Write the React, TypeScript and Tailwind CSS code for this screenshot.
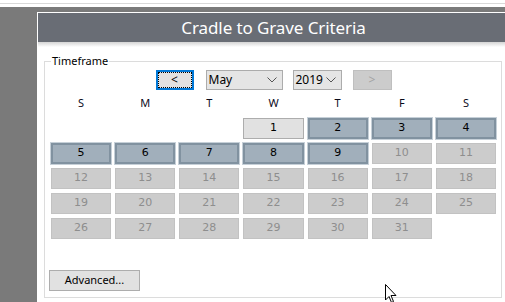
const WEEKDAYS = ["S", "M", "T", "W", "T", "F", "S"];

type Cell = { day: number; kind: "open" | "picked" | "off" } | null;

const cells: Cell[] = [
  null,
  null,
  null,
  { day: 1, kind: "open" },
  { day: 2, kind: "picked" },
  { day: 3, kind: "picked" },
  { day: 4, kind: "picked" },
  { day: 5, kind: "picked" },
  { day: 6, kind: "picked" },
  { day: 7, kind: "picked" },
  { day: 8, kind: "picked" },
  { day: 9, kind: "picked" },
  ...Array.from({ length: 22 }, (_, i) => ({ day: i + 10, kind: "off" as const })),
];

function DayCell({ cell }: { cell: Cell }) {
  if (!cell) return <div className="h-[21px]" />;
  if (cell.kind === "picked") {
    return (
      <div className="h-[21px] flex items-center justify-center bg-[#a1afbb] border-2 border-[#8192a0] outline outline-1 outline-[#c6d0d8] text-black">
        {cell.day}
      </div>
    );
  }
  if (cell.kind === "open") {
    return (
      <div className="h-[21px] flex items-center justify-center bg-[#e1e1e1] border border-[#adadad] text-black">
        {cell.day}
      </div>
    );
  }
  return (
    <div className="h-[21px] flex items-center justify-center bg-[#cccccc] border border-[#c2c2c2] text-[#8e8e8e]">
      {cell.day}
    </div>
  );
}

function Chevron() {
  return (
    <svg width="10" height="6" viewBox="0 0 10 6" className="text-[#555]">
      <path d="M0.5 0.5 L5 5 L9.5 0.5" fill="none" stroke="currentColor" strokeWidth="1" />
    </svg>
  );
}

export default function App() {
  return (
    <div
      className="w-[505px] h-[302px] bg-white overflow-hidden relative flex flex-col"
      style={{ fontFamily: '"Noto Sans", sans-serif' }}
    >
      <div className="h-[3px] shrink-0" />
      <div className="h-px bg-[#d9d9d9] shrink-0" />
      <div className="h-[3px] shrink-0" />
      <div className="flex-1 bg-[#7a7a7a] pt-[5px] pl-[37px]">
        <div className="w-[472px] h-full bg-white border-l border-t border-white flex flex-col">
          <div className="h-[29px] bg-[#696d75] flex items-center justify-center text-white text-[17px] tracking-[-0.1px]">
            Cradle to Grave Criteria
          </div>
          <div className="h-[5px] bg-gradient-to-b from-[#d4d4d4] to-white" />
          <div className="pt-[8px] pl-[6px] pr-[7px]">
            <fieldset className="border border-[#dcdcdc] h-[243px] pl-[6px] pr-[5px]">
              <legend className="px-px text-[11px] leading-[12px] text-black">
                Timeframe
              </legend>
              <div className="flex items-center justify-center mt-[3px] h-[20px] text-[12px]">
                <button className="w-[38px] h-[20px] bg-[#e1e1e1] border-2 border-[#0078d7] flex items-center justify-center">
                  <span className="w-full h-full border border-dotted border-black flex items-center justify-center leading-none">
                    &lt;
                  </span>
                </button>
                <div className="ml-[12px] w-[77px] h-[20px] bg-[#e5e5e5] border border-[#acacac] flex items-center justify-between pl-[2px] pr-[5px]">
                  <span>May</span>
                  <Chevron />
                </div>
                <div className="ml-[10px] w-[49px] h-[20px] bg-[#e5e5e5] border border-[#acacac] flex items-center justify-between pl-[2px] pr-[5px]">
                  <span>2019</span>
                  <Chevron />
                </div>
                <button className="ml-[11px] w-[39px] h-[20px] bg-[#cccccc] border border-[#bfbfbf] text-[#a3a3a3] flex items-center justify-center">
                  &gt;
                </button>
              </div>
              <div className="grid grid-cols-7 gap-x-[4px] mt-[7px] text-[11px] text-[#0a0a1a]">
                {WEEKDAYS.map((d, i) => (
                  <div key={i} className="h-[12px] leading-[12px] text-center">
                    {d}
                  </div>
                ))}
              </div>
              <div
                className="grid grid-cols-7 gap-x-[4px] gap-y-[4px] mt-[9px] text-[11px]"
                style={{ fontFamily: '"DejaVu Sans", sans-serif' }}
              >
                {cells.map((c, i) => (
                  <DayCell key={i} cell={c} />
                ))}
              </div>
              <div className="mt-[27px] -ml-[2px]">
                <button className="w-[91px] h-[21px] bg-[#e1e1e1] border border-[#adadad] text-[11px] text-black">
                  Advanced...
                </button>
              </div>
            </fieldset>
          </div>
        </div>
      </div>
      <svg
        className="absolute left-[385px] top-[284px]"
        width="13"
        height="20"
        viewBox="0 0 13 20"
      >
        <path
          d="M0.5 0.5 L0.5 16 L4 12.5 L6.5 18.5 L8.5 17.5 L6 11.5 L11 11.5 Z"
          fill="white"
          stroke="black"
          strokeWidth="1"
        />
      </svg>
    </div>
  );
}
